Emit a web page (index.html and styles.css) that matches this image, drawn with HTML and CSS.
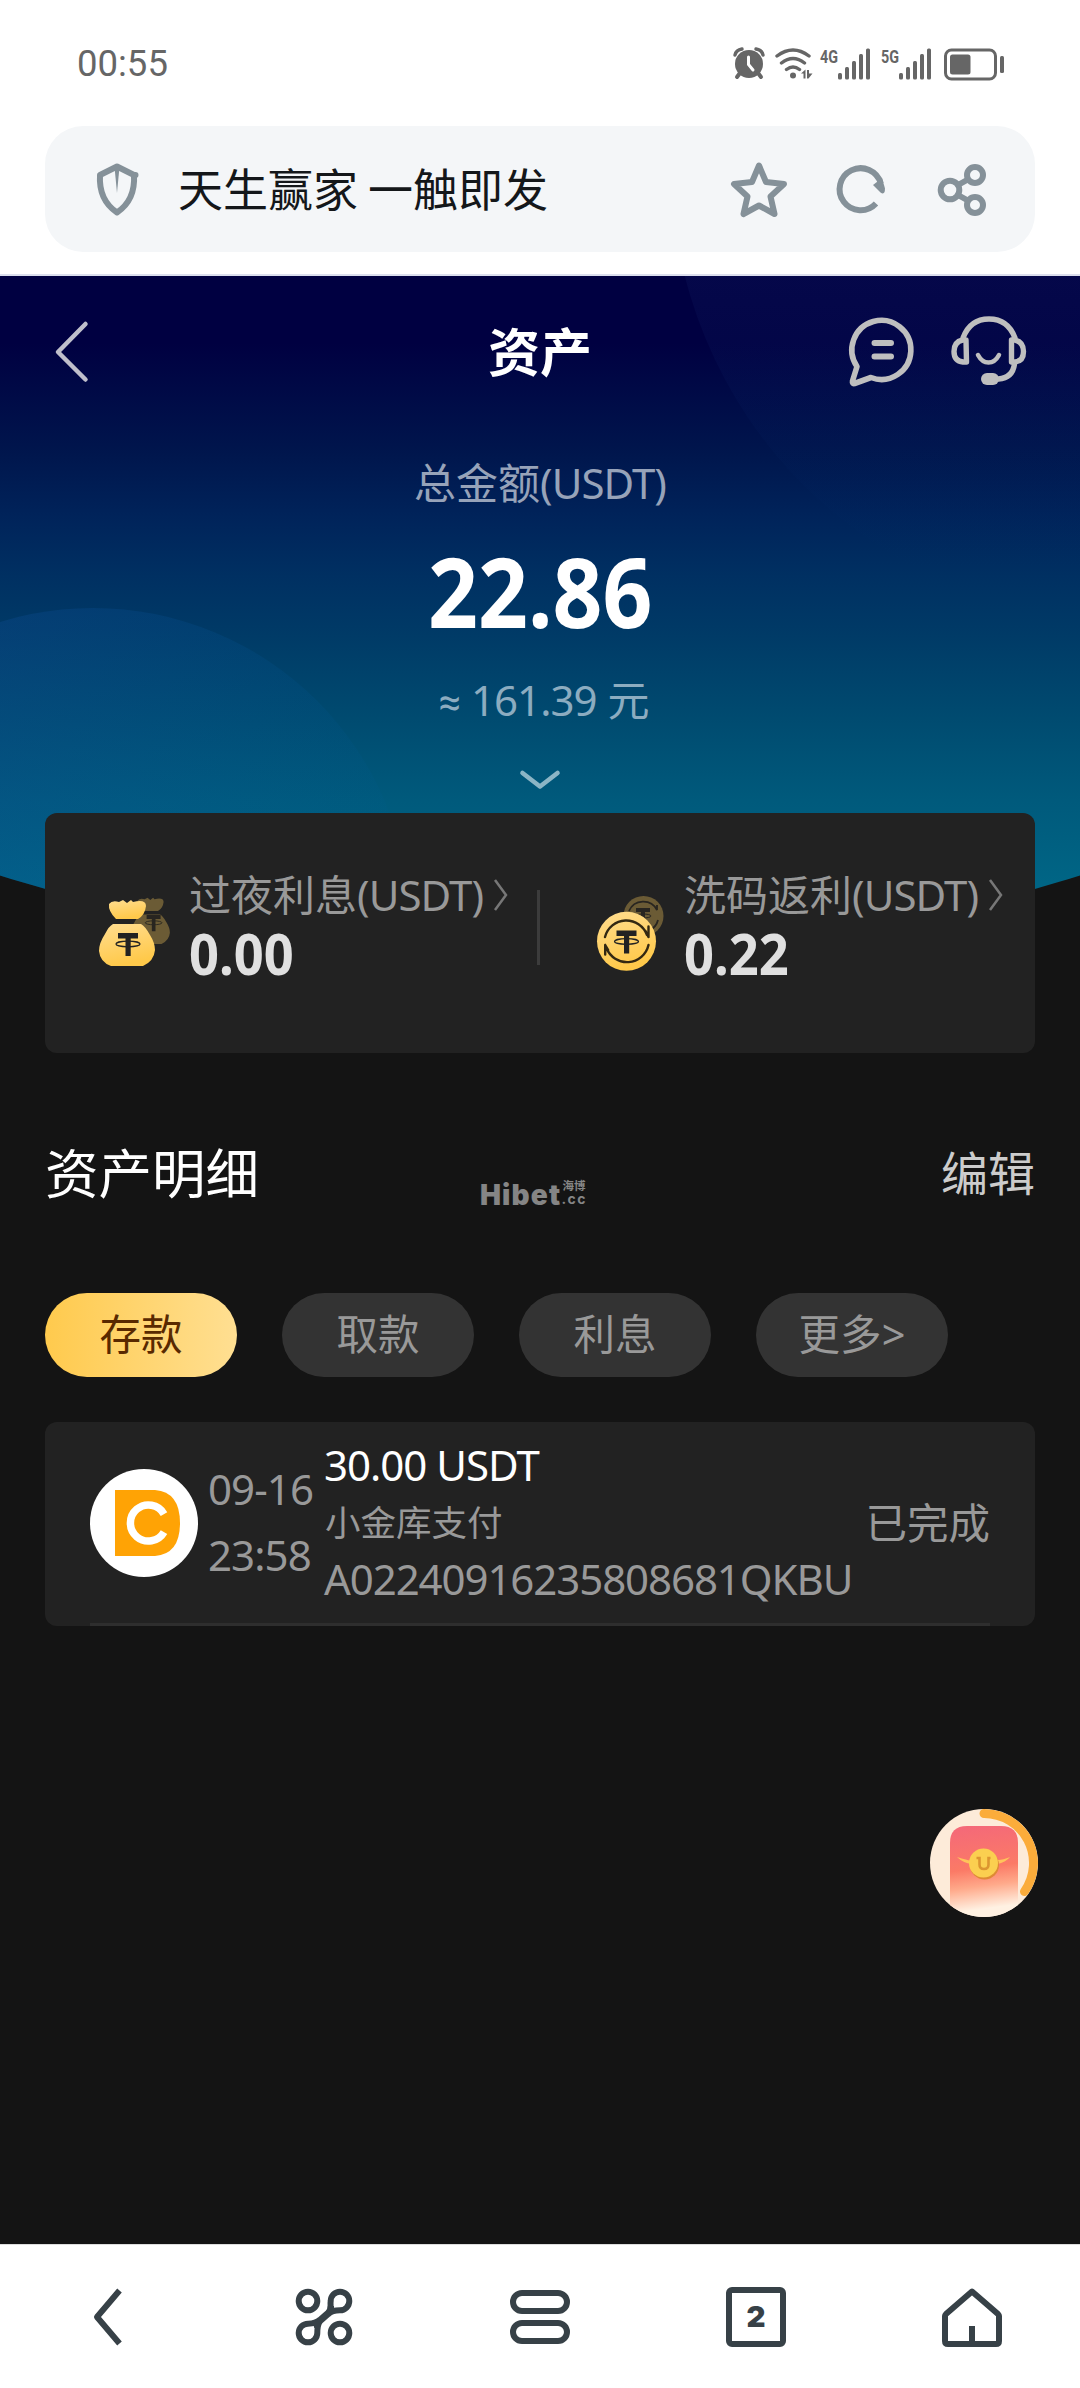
FILE: index.html
```html
<!DOCTYPE html>
<html lang="zh-CN">
<head>
<meta charset="utf-8">
<title>资产</title>
<link rel="stylesheet" href="styles.css">
</head>
<body>
<div class="status">
  <span class="clock">00:55</span>
  <svg class="status-icons" viewBox="730 44 280 40" fill="#666">
    <g>
      <circle cx="749" cy="64" r="14"/>
      <path d="M735 55q1-5 7-6M763 55q-1-5-7-6" fill="none" stroke="#666" stroke-width="3.4" stroke-linecap="round"/>
      <path d="M740 73l-3 4M758 73l3 4" stroke="#666" stroke-width="4" stroke-linecap="round"/>
      <path d="M748.500 57v7.500l4.500 5.500" fill="none" stroke="#fff" stroke-width="3" stroke-linecap="round"/>
    </g>
    <g fill="none" stroke="#666" stroke-width="3.400" stroke-linecap="round">
      <path d="M777 56q16-12 32 0M781.500 63q11.500-9 23 0M786.500 69.500q6.500-5 13 0"/>
    </g>
    <circle cx="793" cy="75.500" r="3"/>
    <path d="M801 73.500l4.500-4v9h-2v-5zM807 70h2v3.500h3.500l-4 5H807z"/>
    <text x="820" y="62.500" class="net" textLength="18" lengthAdjust="spacingAndGlyphs">4G</text>
    <g id="bars"><rect x="838" y="73" width="4" height="6.500" rx="1.500"/><rect x="845" y="67" width="4" height="12.500" rx="1.500"/><rect x="852" y="61" width="4" height="18.500" rx="1.500"/><rect x="859" y="54" width="4" height="25.500" rx="1.500"/><rect x="866" y="48.500" width="4" height="31" rx="1.500"/></g>
    <text x="881" y="62.500" class="net" textLength="18" lengthAdjust="spacingAndGlyphs">5G</text>
    <use href="#bars" x="61"/>
    <rect x="945.500" y="50" width="50" height="29" rx="6" fill="none" stroke="#666" stroke-width="3"/>
    <rect x="950" y="54.500" width="20.500" height="20" rx="2.500"/>
    <rect x="1000" y="56" width="4" height="17" rx="1.500"/>
  </svg>
</div>
<div class="address">
  <svg class="shield" viewBox="95 160 44 58"><path d="M117 166.500l17 8.500q3 0 0 0 1.500 25-17 37.500-18.500-12.500-17-37.500z" fill="none" stroke="#859199" stroke-width="6" stroke-linejoin="round"/><path d="M114.700 169h4.600l-2.300 24z" fill="#859199"/></svg>
  <span class="site">天生赢家 一触即发</span>
  <svg class="address-icons" viewBox="725 155 270 66" fill="none" stroke="#859199" stroke-width="6" stroke-linejoin="round">
    <path d="M759 164.500l7 16.500 18 2-13.500 12.500 4 17.500-15.500-8.500-15.500 8.500 4-17.500L734 183l18-2z"/>
    <path d="M876 202.500a21 21 0 1 1 4.800-20"/>
    <path d="M873 184l9-7 3 10.500q0 7-4.500 4z" fill="#859199" stroke="none"/>
    <circle cx="950" cy="189" r="9.300"/><circle cx="975" cy="174" r="8"/><circle cx="975" cy="204" r="8"/>
    <path d="M958 184l9-5M958 194l9 5"/>
  </svg>
</div>
<main class="page">
  <section class="hero">
    <svg class="hero-rings" viewBox="0 276 1080 683">
      <defs>
        <linearGradient id="r1" x1="0" y1="0.600" x2="0" y2="0.950"><stop offset="0" stop-color="#203078" stop-opacity=".17"/><stop offset="1" stop-color="#003478" stop-opacity=".0"/></linearGradient>
        <linearGradient id="r2" x1="0" y1="0" x2="1" y2="0.350"><stop offset="0" stop-color="#144088" stop-opacity=".5"/><stop offset="1" stop-color="#0060a0" stop-opacity=".05"/></linearGradient>
      </defs>
      <circle cx="1124" cy="165" r="453" fill="url(#r1)"/>
      <circle cx="93" cy="925" r="317" fill="url(#r2)"/>
    </svg>
    <header class="topbar">
      <svg class="back" viewBox="50 318 42 68"><path d="M85.500 324L58 352l27.500 27.500" fill="none" stroke="#bfbfcb" stroke-width="4.500" stroke-linecap="round" stroke-linejoin="round"/></svg>
      <h1>资产</h1>
      <svg class="top-icons" viewBox="845 310 185 80" fill="none" stroke="#bfbfbf" stroke-width="5.600" stroke-linecap="round" stroke-linejoin="round">
        <path d="M857 366.500A29.500 29.500 0 1 1 871 377.500l-16.500 6q-2.500.5-2-2.500z"/>
        <path d="M874.500 343h16.500M874.500 356.500h16.500" stroke-width="6"/>
        <path d="M963 338q7-19 26-19t26 19M966 340h-3.500q-8.500 2-8.500 11.500T963 362h3.500zM1011.500 340h3.500q8.500 2 8.500 11.500T1015 362h-3.500zM1014.500 364q-2 14-16 15" stroke-width="5.400"/>
        <path d="M978 355q4 7.500 10.500 7.500T999 355" stroke-width="4.500"/>
        <rect x="981" y="373" width="18" height="12" rx="6" fill="#bfbfbf" stroke="none"/>
      </svg>
    </header>
    <p class="label">总金额<span class="latin">(USDT)</span></p>
    <p class="total"><span>22.86</span></p>
    <p class="approx"><span class="almost">≈</span><span class="latin">161.39</span> 元</p>
    <svg class="chevron" viewBox="517 767 46 26"><path d="M522.500 773L540 786.500 557.500 773" fill="none" stroke="#8cb5c5" stroke-width="4.600" stroke-linecap="round" stroke-linejoin="round"/></svg>
  </section>

  <section class="rewards">
    <div class="reward">
      <svg class="reward-icon" viewBox="97 890 78 84">
        <defs>
          <linearGradient id="gold" x1="0" y1="0" x2="0.300" y2="1"><stop offset="0" stop-color="#ffdd90"/><stop offset="1" stop-color="#ffc94a"/></linearGradient>
          <g id="bag">
            <path d="M109 904q3-4 10-2l4-2 4 3 4-3 2 2q13-3 13 4-1 9-8 13h-22q-8-8-7-15z"/>
            <path d="M113 924h28q4 2 9 11 5 8 5 15-1 11-12 16h-32q-11-4-12-15 0-8 6-17 4-8 8-10z"/>
          </g>
          <g id="tether"><path d="M118 933h20v5.500h-7.300V956h-5.200v-17.500H118z" stroke="none"/><ellipse cx="128" cy="944" rx="12" ry="2.800" fill="none" stroke-width="1.300"/></g>
        </defs>
        <g transform="translate(70.500 268.500) scale(.7 .7) translate(-12 0)" fill="#6b5b35"><use href="#bag" x="-1" y="-1"/></g>
        <g transform="translate(64 262) scale(.7)" fill="#282520" stroke="#282520"><use href="#tether"/></g>
        <use href="#bag" fill="url(#gold)"/>
        <use href="#tether" fill="#222" stroke="#222"/>
      </svg>
      <div>
        <p class="reward-name">过夜利息<span class="latin">(USDT)</span><svg class="more" viewBox="0 0 16 34"><path d="M2 2l11 15L2 32"/></svg></p>
        <p class="amount"><span>0.00</span></p>
      </div>
    </div>
    <div class="reward">
      <svg class="reward-icon" viewBox="595 890 78 84">
        <circle cx="643.500" cy="916" r="20" fill="#6b5b35"/>
        <g fill="none" stroke="#282520" stroke-width="1.800"><path d="M629 911a15.500 15.500 0 0 1 28-1v-5M658 920a15 15 0 0 1-8 10"/><path d="M636 910h14M643 910v10" stroke-width="4"/><ellipse cx="643" cy="916" rx="8" ry="2" stroke-width="1"/></g>
        <circle cx="626.500" cy="941.300" r="29.500" fill="url(#gold)"/>
        <g fill="none" stroke="#332812" stroke-width="2.400" stroke-linecap="round"><path d="M605 937a22 22 0 0 1 42-2M648.500 926.500V937M648.500 945a22 22 0 0 1-42 3M605.200 945v9.500M645.500 931l3 6M605.200 945l3 5"/></g>
        <use href="#tether" x="498.500" y="-2.500" fill="#222" stroke="#222"/>
      </svg>
      <div>
        <p class="reward-name">洗码返利<span class="latin">(USDT)</span><svg class="more" viewBox="0 0 16 34"><path d="M2 2l11 15L2 32"/></svg></p>
        <p class="amount"><span>0.22</span></p>
      </div>
    </div>
  </section>

  <div class="detail-head">
    <h2>资产明细</h2>
    <div class="brand"><b>Hibet</b><span><i>海博</i><em>.cc</em></span></div>
    <a class="edit">编辑</a>
  </div>

  <nav class="tabs">
    <a class="tab active">存款</a><a class="tab">取款</a><a class="tab">利息</a><a class="tab">更多<span class="gt">&gt;</span></a>
  </nav>

  <section class="records">
    <div class="record">
      <svg class="avatar" viewBox="90 1469 108 108"><circle cx="144" cy="1523" r="54" fill="#fff"/><path d="M115 1490h40q25 2 25 33t-25 33h-40z" fill="#ffa305"/><path d="M164 1514a18 18 0 1 0 0 18" fill="none" stroke="#fff" stroke-width="7.500"/></svg>
      <div class="when"><span>09-16</span><span>23:58</span></div>
      <div class="info"><span class="sum">30.00 USDT</span><span class="method">小金库支付</span><span class="order">A02240916235808681QKBU</span></div>
      <span class="state">已完成</span>
    </div>
  </section>
</main>

<svg class="gift" viewBox="930 1809 108 108">
  <defs>
    <linearGradient id="env" x1="0" y1="0" x2="0.100" y2="1"><stop offset="0" stop-color="#f4687a"/><stop offset=".5" stop-color="#fb7a66"/><stop offset=".7" stop-color="#ffa98a"/><stop offset=".95" stop-color="#fff1e2"/></linearGradient>
    <clipPath id="disc"><circle cx="984" cy="1863" r="54"/></clipPath>
  </defs>
  <circle cx="984" cy="1863" r="54" fill="#fdebd9"/>
  <g clip-path="url(#disc)">
    <path d="M950 1917v-74q0-17 17-17h34q17 0 17 17v74z" fill="url(#env)"/>
    <path d="M984 1813.500a49.500 49.500 0 0 1 40.500 78" fill="none" stroke="#fbac3b" stroke-width="9" stroke-linecap="round"/>
  </g>
  <path d="M957 1857q10 3 15 4v3q-9-1-15-7zM1010 1857q-7 3-12 3v4q8-2 12-7z" fill="#ffc35b"/>
  <circle cx="984.500" cy="1865" r="14.500" fill="#de8a35"/><circle cx="983.500" cy="1863" r="14.500" fill="#fbcf50"/>
  <path d="M976.500 1858h3v6.500q0 4.500 4.500 4.500t4.500-4.500V1858h2" fill="none" stroke="#dc9630" stroke-width="2.600"/>
</svg>

<nav class="browser-nav">
  <svg viewBox="68 2276 80 80"><path d="M119.500 2289.500L97 2316l22.500 26.500"/></svg>
  <svg viewBox="284 2276 80 80"><circle cx="308" cy="2300" r="9.300"/><circle cx="340" cy="2332" r="9.300"/><path d="M330.500 2309c.5-3-.3-6 .2-9a9.300 9.300 0 1 1 9.300 9.300c-6 0-9 1-12 4l-8 7c-2 2.500-2.700 5-2.700 11.700a9.300 9.300 0 1 1-9.300-9.300c6 0 9-1 12-4l8-7c2-2 2.500-3 2.500-7M330.500 2309l4-1M317.500 2323l-4 1"/></svg>
  <svg viewBox="500 2276 80 80"><rect x="513" y="2292" width="54" height="18" rx="9"/><rect x="513" y="2322" width="54" height="18" rx="9"/></svg>
  <svg viewBox="716 2276 80 80"><rect x="729" y="2289" width="54" height="54" rx="3"/><text x="756" y="2326" text-anchor="middle" class="tab-count" textLength="19" lengthAdjust="spacingAndGlyphs">2</text></svg>
  <svg viewBox="932 2276 80 80"><path d="M945 2315q0-1 1-2l26-22.500 26 22.500q1 1 1 2v25q0 3-3 3h-48q-3 0-3-3zM972 2325v17"/></svg>
</nav>
</body>
</html>
```
FILE: styles.css
```css
* { box-sizing: border-box; }
body {
  position: relative;
  display: flex;
  flex-direction: column;
  width: 1080px;
  height: 2388px;
  margin: 0;
  overflow: hidden;
  background: #fff;
  font-family: "Noto Sans", "Noto Sans CJK SC", sans-serif;
  font-size: 42px;
}
p, h1, h2 { margin: 0; font-weight: 400; }
svg { display: block; flex: none; }
.latin { letter-spacing: -0.95px; }

.status {
  display: flex;
  justify-content: space-between;
  align-items: center;
  height: 126px;
  padding: 2px 70px 0 77px;
}
.clock { font: 400 36.500px/40px Roboto, sans-serif; color: #666; }
.status-icons { width: 280px; height: 40px; }
.net { font: 700 19px Roboto, sans-serif; }

.address {
  display: flex;
  align-items: center;
  height: 126px;
  margin: 0 45px 22px;
  padding: 0 40px 0 50px;
  border-radius: 38px;
  background: #f4f6f8;
}
.shield { width: 44px; height: 58px; }
.site {
  flex: 1;
  margin: -3px 0 0 39px;
  font: 400 45px/60px "Noto Sans CJK SC", sans-serif;
  color: #14171a;
}
.address-icons { width: 270px; height: 66px; }

.page {
  flex: 1;
  border-top: 2px solid #dcdfed;
  background: #141414;
}
.hero {
  position: relative;
  display: flex;
  flex-direction: column;
  align-items: center;
  height: 683px;
  background: linear-gradient(#000041 0, #000041 67px, #00164d 178px, #00235a 239px, #003062 300px, #003b67 361px, #004b70 443px, #005a7c 525px, #006585 606px);
  clip-path: circle(1786px at 540px -1103px);
}
.hero-rings { position: absolute; inset: 0; width: 1080px; height: 683px; }
.topbar {
  position: relative;
  display: grid;
  grid-template-columns: 1fr auto 1fr;
  align-items: center;
  width: 100%;
  height: 152px;
  padding: 0 50px;
}
.back { width: 42px; height: 68px; }
h1 { margin-top: -5px; font: 700 52px/70px "Noto Sans CJK SC", sans-serif; color: #fff; }
.top-icons { justify-self: end; width: 185px; height: 80px; margin-top: -4px; }
.label { position: relative; margin-top: 29px; line-height: 52px; color: #97a3b9; }
.total {
  position: relative;
  margin-top: 32px;
  font-size: 96px;
  font-weight: 700;
  line-height: 100px;
  color: #fff;
}
.total span { display: inline-block; transform: scaleX(.91); }
.approx { position: relative; margin: 34px 0 0 8px; line-height: 50px; color: #8cacc0; }
.almost { margin-right: 10px; font-family: Roboto, sans-serif; font-size: 40px; }
.chevron { position: relative; width: 46px; height: 26px; margin-top: 39px; }

.rewards {
  position: relative;
  display: grid;
  grid-template-columns: 1fr 1fr;
  height: 240px;
  margin: -146px 45px 0;
  border-radius: 12px;
  background: #222;
}
.reward {
  position: relative;
  display: flex;
  align-items: flex-start;
  padding: 54px 0 0 52px;
}
.reward + .reward { padding-left: 55px; }
.reward:first-child::after {
  content: "";
  position: absolute;
  right: 0;
  top: 77px;
  width: 3px;
  height: 75px;
  background: #3c3c3c;
}
.reward-icon { width: 78px; height: 84px; margin: 23px 14px 0 0; }
.reward + .reward .reward-icon { margin-right: 11px; }
.reward-name {
  display: flex;
  align-items: center;
  line-height: 56px;
  color: #999;
  white-space: nowrap;
}
.more { width: 16px; height: 34px; margin-left: 10px; fill: none; stroke: #777; stroke-width: 2.500; }
.amount { margin-top: 1px; font-size: 57px; font-weight: 700; line-height: 58px; color: #e0e0e0; }
.amount span { display: inline-block; transform: scaleX(.92); transform-origin: left; }

.detail-head {
  display: grid;
  grid-template-columns: 1fr auto 1fr;
  align-items: center;
  height: 60px;
  margin: 91px 45px 0;
}
h2 { margin-top: -1px; font-size: 53.500px; line-height: 60px; color: #fff; }
.edit { justify-self: end; margin-top: -2px; font-size: 47px; line-height: 60px; color: #ccc; }
.brand { display: flex; align-self: end; margin: 0 13px -5px 0; color: #858585; }
.brand b { font: 900 28px/28px Inter, sans-serif; letter-spacing: 1.2px; }
.brand span { display: flex; flex-direction: column; }
.brand i { font: 700 11.500px/14px "Noto Sans CJK SC", sans-serif; margin: -3px 0 0 1px; }
.brand em { font: 700 14px/14px Inter, sans-serif; letter-spacing: 1.5px; }

.tabs { display: flex; gap: 45px; margin: 89px 45px 0; }
.tab {
  width: 192px;
  height: 84px;
  border-radius: 42px;
  background: #333;
  color: #999;
  font-size: 41.500px;
  line-height: 83px;
  text-align: center;
}
.tab.active { background: linear-gradient(90deg, #ffca4d, #ffdf92); color: #592900; }

.records {
  height: 204px;
  margin: 45px 45px 0;
  padding: 0 45px;
  border-radius: 12px;
  background: #222;
}
.record {
  display: flex;
  align-items: center;
  height: 204px;
  border-bottom: 3px solid #2e2e2e;
  color: #999;
}
.avatar { width: 108px; height: 108px; }
.when {
  display: flex;
  flex-direction: column;
  width: 115px;
  margin: -2px 0 0 10px;
  line-height: 66px;
  letter-spacing: -.9px;
}
.info { display: flex; flex-direction: column; flex: 1; margin: -3px 0 0 1px; }
.sum { line-height: 59px; letter-spacing: -1px; color: #fff; }
.method { font-size: 35.500px; line-height: 57px; margin-left: 1px; }
.order { line-height: 56px; letter-spacing: -1.08px; }
.state { margin-top: -3px; font-size: 41.500px; }

.gift { position: absolute; left: 930px; top: 1809px; width: 108px; height: 108px; }

.browser-nav {
  display: grid;
  grid-template-columns: repeat(5, 1fr);
  align-items: center;
  justify-items: center;
  height: 144px;
  border-top: 1px solid #ddd;
  background: #fff;
}
.browser-nav svg { width: 80px; height: 80px; fill: none; stroke: #374147; stroke-width: 6; stroke-linejoin: round; }
.browser-nav .tab-count { font: 900 29px Inter, sans-serif; fill: #374147; stroke: none; }
```
